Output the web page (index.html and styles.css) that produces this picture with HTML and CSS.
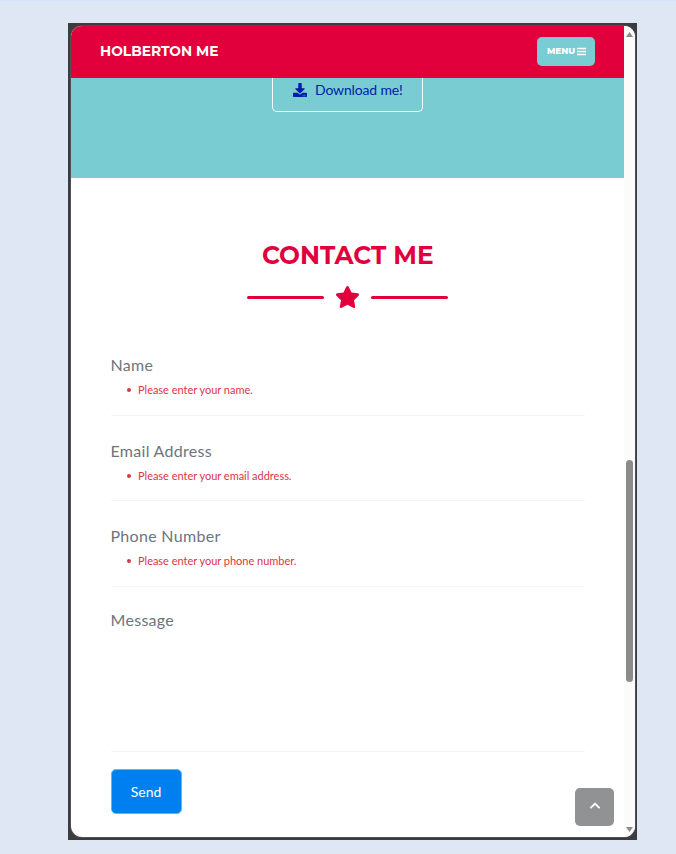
FILE: index.html
```html
<!DOCTYPE html>
<html lang="en">
<head>
<meta charset="utf-8">
<title>Holberton Me</title>
<link rel="stylesheet" href="styles.css">
</head>
<body>
<div class="frame">
  <div class="window">
    <div class="page">
      <header class="nav">
        <a class="brand">HOLBERTON ME</a>
        <button class="menu"><span>MENU</span>
          <svg width="9" height="9" viewBox="0 0 9 9"><path d="M0 1.5h9M0 4.5h9M0 7.5h9" stroke="#fff" stroke-width="1.3"/></svg>
        </button>
      </header>
      <section class="about">
        <a class="download">
          <svg width="14" height="14" viewBox="0 0 512 512" fill="#001ca8"><path d="M216 0h80c13 0 24 11 24 24v168h88c18 0 27 21 14 34L270 378c-7 7-20 7-28 0L90 226c-13-13-4-34 14-34h88V24c0-13 11-24 24-24zm296 376v112c0 13-11 24-24 24H24c-13 0-24-11-24-24V376c0-13 11-24 24-24h147l49 49c20 20 52 20 72 0l49-49h147c13 0 24 11 24 24zM388 464c0-11-9-20-20-20s-20 9-20 20 9 20 20 20 20-9 20-20zm64 0c0-11-9-20-20-20s-20 9-20 20 9 20 20 20 20-9 20-20z"/></svg>
          <span>Download me!</span>
        </a>
      </section>
      <main class="contact">
        <h2>CONTACT ME</h2>
        <div class="divider">
          <i></i>
          <svg width="25" height="22" viewBox="0 0 576 512" fill="#e1003c"><path d="M259 18l-65 132-146 21c-26 4-37 36-18 55l106 103-25 145c-5 26 23 46 46 34l131-69 131 69c23 12 51-8 46-34l-25-145 106-103c19-19 8-51-18-55l-146-21-65-132c-12-24-46-24-58 0z"/></svg>
          <i></i>
        </div>
        <form>
          <div class="field"><label>Name</label><ul><li>Please enter your name.</li></ul></div>
          <div class="field"><label>Email Address</label><ul><li>Please enter your email address.</li></ul></div>
          <div class="field"><label>Phone Number</label><ul><li>Please enter your phone number.</li></ul></div>
          <div class="field message"><label>Message</label></div>
          <button type="button" class="send">Send</button>
        </form>
      </main>
    </div>
    <div class="scrollbar">
      <svg width="7" height="5" viewBox="0 0 7 5"><path d="M3.5 0L7 5H0z" fill="#8b8b8b"/></svg>
      <div class="thumb"></div>
      <svg width="7" height="5" viewBox="0 0 7 5"><path d="M0 0h7L3.5 5z" fill="#8b8b8b"/></svg>
    </div>
    <a class="to-top">
      <svg width="10" height="7" viewBox="0 0 10 7"><path d="M1 5.6l4-4 4 4" fill="none" stroke="#fff" stroke-width="1.9" stroke-linecap="round" stroke-linejoin="round"/></svg>
    </a>
  </div>
</div>
</body>
</html>
```
FILE: styles.css
```css
* { box-sizing: border-box; }
body {
  margin: 0;
  height: 854px;
  overflow: hidden;
  padding: 22px 0 0 68px;
  border-top: 1px solid #d2e3fc;
  background: #dfe6f4;
  font-family: Lato, sans-serif;
}
.frame {
  width: 569px;
  height: 817px;
  padding: 3px 2px 3px 3px;
  background: #3c3c3e;
}
.window {
  position: relative;
  display: flex;
  height: 811px;
  border-radius: 11px;
  overflow: hidden;
  background: #fff;
  box-shadow: 0 0 0 1px #77777a55;
}
.page { width: 553px; }
.nav {
  display: flex;
  align-items: center;
  justify-content: space-between;
  height: 52px;
  padding: 0 29px 2px;
  background: #e1003c;
  color: #fff;
}
.brand {
  font: 700 13.8px/20px Montserrat, Inter, sans-serif;
}
.menu {
  display: flex;
  align-items: center;
  justify-content: center;
  gap: 2px;
  width: 58px;
  height: 29px;
  padding: 0 0 0 1px;
  border: 0;
  border-radius: 5px;
  background: #79cdd2;
  color: #fff;
  font: 800 8.7px/12px Montserrat, Inter, sans-serif;
}
.about {
  display: flex;
  justify-content: center;
  height: 100px;
  background: #79cdd2;
}
.download {
  display: flex;
  align-items: center;
  gap: 8px;
  width: 151px;
  height: 34px;
  padding: 0 0 10px 20px;
  border: 1px solid #f4fbfb;
  border-top: 0;
  border-radius: 0 0 5px 5px;
  color: #001ca8;
  font-size: 14px;
  line-height: 20px;
  letter-spacing: -0.15px;
}
.contact { padding: 60px 39px 0 39.5px; }
h2 {
  margin: 0;
  color: #e1003c;
  font: 700 24.8px/34px Montserrat, Inter, sans-serif;
  text-align: center;
}
.divider {
  display: flex;
  align-items: center;
  justify-content: center;
  gap: 11px;
  height: 22px;
  margin: 14px 0 22px;
}
.divider i {
  width: 77px;
  height: 3px;
  border-radius: 2px;
  background: #e1003c;
}
.field {
  height: 85.7px;
  padding-top: 23px;
  border-bottom: 1px solid #f3f4f5;
}
label {
  display: block;
  color: #6c757d;
  font-size: 16px;
  line-height: 24px;
  letter-spacing: 0.3px;
}
ul {
  margin: 4px 0 0;
  padding-left: 27.5px;
  color: #dc3545;
  font-size: 11px;
  line-height: 17px;
  letter-spacing: -0.02px;
  list-style: none;
}
li {
  position: relative;
}
li::before {
  content: "";
  position: absolute;
  left: -11.5px;
  top: 7px;
  width: 4px;
  height: 4px;
  border-radius: 50%;
  background: #dc3545;
}
.message {
  height: 165px;
  padding-top: 21px;
}
.send {
  display: block;
  width: 71px;
  height: 45px;
  margin-top: 17px;
  padding: 0;
  border: 1px solid #55bfe0;
  border-radius: 5px;
  background: #007ff0;
  color: #fff;
  font: 14px/20px Lato, sans-serif;
}
.scrollbar {
  display: flex;
  flex-direction: column;
  align-items: center;
  width: 11px;
  padding: 6px 0 5px;
  background: #fbfbfb;
}
.thumb {
  width: 7px;
  height: 222px;
  margin: 423px 0 auto;
  border-radius: 4px;
  background: #8b8b8b;
}
.to-top {
  position: absolute;
  right: 21px;
  bottom: 11px;
  display: flex;
  align-items: center;
  justify-content: center;
  width: 39px;
  height: 38px;
  padding-bottom: 4px;
  border-radius: 5px;
  background: #919293;
}
```
